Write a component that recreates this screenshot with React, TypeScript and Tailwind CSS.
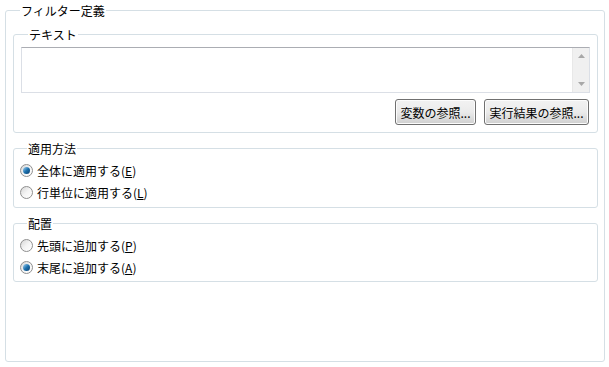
import React from "react";

const font = { fontFamily: '"Noto Sans CJK JP", "Noto Sans", sans-serif' };

const Radio: React.FC<{ checked?: boolean; label: string; accel: string }> = ({
  checked = false,
  label,
  accel,
}) => (
  <div className="flex items-center h-[22px]">
    <span className="relative w-[13px] h-[13px] rounded-full border border-[#8f8f8f] bg-gradient-to-br from-[#d6d6d6] via-[#f4f4f4] to-[#ffffff] flex items-center justify-center">
      {checked && (
        <span className="w-[7px] h-[7px] rounded-full bg-gradient-to-br from-[#9fd6f5] via-[#1d72ae] to-[#0b3e6f]" />
      )}
    </span>
    <span className="ml-[4px] text-[12px] leading-[15px] text-black">
      {label}(<span className="underline">{accel}</span>)
    </span>
  </div>
);

const Button: React.FC<{ children: React.ReactNode; w: string }> = ({ children, w }) => (
  <button
    className={`${w} h-[26px] rounded-[3px] border border-[#707070] bg-gradient-to-b from-[#f2f2f2] via-[#ebebeb] to-[#cfcfcf] text-[12px] leading-[15px] text-black shadow-[inset_0_0_0_1px_#fcfcfc]`}
  >
    {children}
  </button>
);

const Group: React.FC<{ title: string; className?: string; children: React.ReactNode }> = ({
  title,
  className = "",
  children,
}) => (
  <fieldset className={`border border-[#d5dfe5] rounded-[3px] ${className}`}>
    <legend className="ml-[7px] px-[1px] text-[12px] leading-[15px] text-black">{title}</legend>
    {children}
  </fieldset>
);

export default function App() {
  return (
    <div className="w-[609px] h-[367px] bg-white pt-[3px] pl-[5px]" style={font}>
      <Group title="フィルター定義" className="w-[600px] h-[359px] pl-[7px] pr-[6px] pt-[9px]">
        <Group title="テキスト" className="h-[106px] px-[7px] pt-[5px]">
          <div className="flex h-[46px] border border-[#dbdfe6] border-t-[#abadb3] bg-white">
            <div className="flex-1" />
            <div className="w-[17px] bg-[#f0f0f0] border-l border-[#e8e8e8] flex flex-col justify-between items-center py-[6px]">
              <svg width="7" height="4" viewBox="0 0 7 4">
                <path d="M0 4 L3.5 0 L7 4 Z" fill="#a8a8a8" />
              </svg>
              <svg width="7" height="4" viewBox="0 0 7 4">
                <path d="M0 0 L3.5 4 L7 0 Z" fill="#a8a8a8" />
              </svg>
            </div>
          </div>
          <div className="flex justify-end gap-[8px] mt-[6px] pr-[1px]">
            <Button w="w-[81px]">変数の参照...</Button>
            <Button w="w-[105px]">実行結果の参照...</Button>
          </div>
        </Group>
        <Group title="適用方法" className="mt-[8px] h-[67px] px-[6px] pt-[3px]">
          <Radio checked label="全体に適用する" accel="E" />
          <Radio label="行単位に適用する" accel="L" />
        </Group>
        <Group title="配置" className="mt-[8px] h-[66px] px-[6px] pt-[3px]">
          <Radio label="先頭に追加する" accel="P" />
          <Radio checked label="末尾に追加する" accel="A" />
        </Group>
      </Group>
    </div>
  );
}
